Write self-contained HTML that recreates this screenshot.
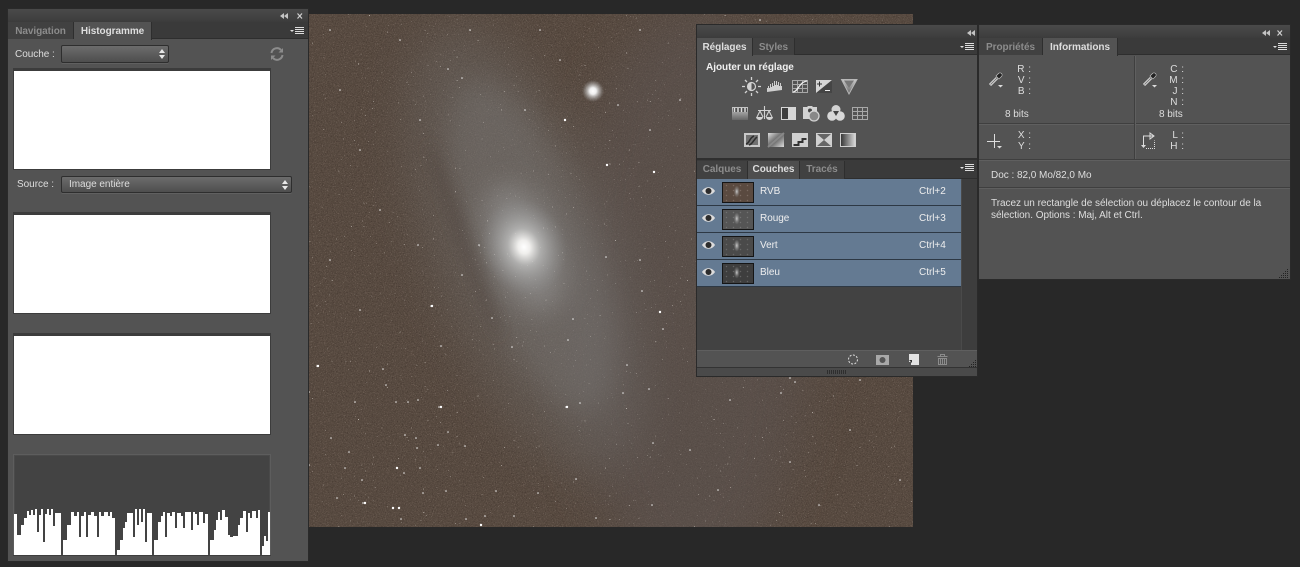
<!DOCTYPE html>
<html lang="fr"><head><meta charset="utf-8"><title>Photoshop</title>
<style>
html,body{margin:0;padding:0;background:#282828;width:1300px;height:567px;overflow:hidden}
body{position:relative;font-family:"Liberation Sans",sans-serif;font-size:10px;color:#dedede}
.a,.t{position:absolute}
.t{white-space:nowrap;line-height:12px;letter-spacing:-.03px}
.p{position:absolute;background:#535353;box-shadow:0 0 0 1px #2a2a2a}
.hd{position:absolute;background:linear-gradient(#4a4a4a,#3c3c3c);height:13px}
.tb{position:absolute;background:#3a3a3a;height:17px;border-bottom:1px solid #2e2e2e;box-sizing:border-box}
.tab{position:absolute;height:17px;box-sizing:border-box;background:#414141;border-right:1px solid #2e2e2e;color:#8c8c8c;font-weight:bold;text-align:center;line-height:19px;font-size:10px;letter-spacing:-.05px}
.tab.on{background:#535353;color:#dedede}
.sel{position:absolute;box-sizing:border-box;border:1px solid #2e2e2e;border-radius:2px;background:linear-gradient(#6c6c6c,#4e4e4e);box-shadow:0 1px 0 #606060}
.box{position:absolute;box-sizing:border-box;left:13px;width:258px;height:102px;border:1px solid #3c3c3c;border-top:3px solid #3c3c3c;background:#fff}
.ln{position:absolute;background:#404040}
.row{position:absolute;left:697px;width:264px;height:27px;box-sizing:border-box;background:#647a92;border-bottom:1px solid #2d3844}
.th{position:absolute;left:722px;width:32px;height:21px;box-sizing:border-box;border:1px solid #151515;background-size:auto,7px 5px,auto}
svg{position:absolute;overflow:visible}
</style></head><body>

<!-- Astro image -->
<svg class="a" style="left:0;top:0" width="1300" height="567" viewBox="0 0 1300 567">
<defs>
<clipPath id="c"><rect x="309" y="14" width="604" height="513"/></clipPath>
<filter id="b6" x="-100%" y="-50%" width="300%" height="200%"><feGaussianBlur stdDeviation="7"/></filter>
<filter id="b14" x="-60%" y="-60%" width="220%" height="220%"><feGaussianBlur stdDeviation="14"/></filter>
<filter id="b24" x="-80%" y="-60%" width="260%" height="220%"><feGaussianBlur stdDeviation="24"/></filter>
<filter id="n" x="0" y="0" width="100%" height="100%" color-interpolation-filters="sRGB"><feTurbulence type="fractalNoise" baseFrequency=".9" numOctaves="2" seed="4"/><feColorMatrix values="0 0 0 0 .62  0 0 0 0 .54  0 0 0 0 .5  2 2 0 0 -2"/></filter>
<filter id="n2" x="0" y="0" width="100%" height="100%" color-interpolation-filters="sRGB"><feTurbulence type="fractalNoise" baseFrequency=".8" numOctaves="1" seed="9"/><feColorMatrix values="0 0 0 0 .22  0 0 0 0 .17  0 0 0 0 .15  0 2 2 0 -2"/></filter>
<filter id="n3" x="0" y="0" width="100%" height="100%" color-interpolation-filters="sRGB"><feTurbulence type="fractalNoise" baseFrequency=".72" numOctaves="1" seed="21"/><feColorMatrix values="0 0 0 0 .95  0 0 0 0 .93  0 0 0 0 .9  9 9 0 0 -12.400"/></filter>
<radialGradient id="core"><stop offset="0" stop-color="#fff"/><stop offset=".14" stop-color="#efeeec"/><stop offset=".38" stop-color="#b6b6b5" stop-opacity=".85"/><stop offset="1" stop-color="#8c8c8c" stop-opacity="0"/></radialGradient>
<radialGradient id="st"><stop offset="0" stop-color="#fff"/><stop offset=".3" stop-color="#eee"/><stop offset="1" stop-color="#aaa" stop-opacity="0"/></radialGradient>
</defs>
<g clip-path="url(#c)">
<rect x="309" y="14" width="604" height="513" fill="#56493f"/>
<rect x="309" y="14" width="604" height="513" filter="url(#n2)" opacity=".55"/>
<rect x="309" y="14" width="604" height="513" filter="url(#n)" opacity=".4"/>
<ellipse cx="690" cy="300" rx="120" ry="290" fill="#5d5552" opacity=".5" filter="url(#b24)"/>
<g transform="rotate(-20 524 247)">
<ellipse cx="524" cy="250" rx="92" ry="235" fill="#757372" opacity=".35" filter="url(#b24)"/>
<ellipse cx="532" cy="250" rx="60" ry="175" fill="#7e7d7c" opacity=".35" filter="url(#b14)"/>
<ellipse cx="470" cy="220" rx="6" ry="105" fill="#453831" opacity=".4" filter="url(#b6)"/>
<ellipse cx="524" cy="248" rx="34" ry="66" fill="#9c9c9c" opacity=".55" filter="url(#b14)"/>
</g>
<ellipse cx="524" cy="247" rx="42" ry="50" fill="url(#core)" transform="rotate(-20 524 247)"/>
<circle cx="593" cy="91" r="11" fill="url(#st)"/>
<rect x="309" y="14" width="604" height="513" filter="url(#n3)" opacity=".7"/>
<path stroke="#f4f4f4" stroke-width="1.500" stroke-linecap="round" fill="none" d="M565 120h0M607 165h0M654 172h0M618 105h0M462 78h0M448 69h0M479 245h0M462 275h0M418 245h0M492 318h0M431 306h0M573 319h0M606 257h0M642 291h0M663 329h0M580 403h0M512 347h0M448 432h0M439 407h0M566 407h0M568 340h0M623 393h0M649 389h0M627 365h0M317 366h0M418 400h0M441 346h0M383 369h0M386 385h0M331 438h0M309 392h0M408 402h0M355 402h0M396 402h0M397 468h0M420 468h0M363 503h0M401 519h0M466 519h0M485 516h0M514 516h0M596 518h0M652 505h0M718 490h0M781 393h0M790 462h0M819 505h0M653 443h0M576 479h0M538 493h0M496 491h0M438 445h0M465 446h0M446 491h0M423 493h0M337 498h0M345 468h0M362 480h0M404 473h0M405 435h0M416 438h0M417 448h0M349 452h0M309 465h0M745 348h0M737 350h0M790 378h0M795 382h0M660 312h0M640 260h0M720 250h0M770 290h0M812 220h0M860 240h0M900 170h0M880 100h0M700 70h0M760 20h0M830 60h0M360 150h0M340 90h0M420 120h0M380 210h0M330 260h0M360 310h0M880 300h0M850 430h0M900 480h0M690 450h0M730 400h0M835 360h0M860 380h0M740 250h0M640 30h0M540 30h0M400 40h0M330 30h0M470 30h0M525 110h0M560 60h0M650 130h0M680 100h0"/>
<path stroke="#fff" stroke-width="2.400" stroke-linecap="round" fill="none" d="M441 407h0M567 407h0M393 508h0M399 508h0M318 366h0M432 306h0M654 172h0M607 165h0M565 120h0M660 312h0M365 503h0M397 468h0M481 525h0"/>
</g>
</svg>

<!-- LEFT PANEL -->
<div class="p" style="left:8px;top:9px;width:300px;height:552px">
<div class="hd" style="left:0;top:0;width:300px"></div>
<div class="tb" style="left:0;top:13px;width:300px"></div>
<div class="tab" style="left:0;top:13px;width:66px">Navigation</div>
<div class="tab on" style="left:66px;top:13px;width:78px;height:18px">Histogramme</div>
</div>
<svg style="left:280px;top:13px" width="24" height="8"><path d="M4 0v6L0 3zM8 0v6L4 3z" fill="#c4c4c4"/><path d="M17.500 .5l4.500 5M22 .5l-4.500 5" stroke="#d0d0d0" stroke-width="1.200"/></svg>
<svg style="left:290px;top:27px" width="15" height="9"><path d="M0 3h4L2 5z" fill="#ddd"/><path d="M5 .5h9M5 2.500h9M5 4.500h9M5 6.500h9" stroke="#ddd"/></svg>
<div class="t" style="left:15px;top:49px;font-size:10px">Couche :</div>
<div class="sel" style="left:61px;top:45px;width:108px;height:18px"></div>
<svg style="left:159px;top:49px" width="6" height="10"><path d="M3 0L6 4H0zM3 10L0 6h6z" fill="#e8e8e8"/></svg>
<svg style="left:270px;top:47px" width="14" height="14" viewBox="0 0 14 14"><path d="M1.500 6A5.500 5.500 0 0 1 11 3M12.500 8A5.500 5.500 0 0 1 3 11" fill="none" stroke="#8c8c8c" stroke-width="2"/><path d="M13 1v4.500H8.500zM1 13V8.500h4.500z" fill="#8c8c8c"/></svg>
<div class="box" style="top:68px"></div>
<div class="t" style="left:17px;top:179px;font-size:10px">Source :</div>
<div class="sel" style="left:61px;top:176px;width:231px;height:17px"></div>
<div class="t" style="left:69px;top:179px;font-size:10px">Image entière</div>
<svg style="left:282px;top:180px" width="6" height="10"><path d="M3 0L6 4H0zM3 10L0 6h6z" fill="#e8e8e8"/></svg>
<div class="box" style="top:212px"></div>
<div class="box" style="top:333px"></div>
<div class="a" style="left:13px;top:454px;width:258px;height:102px;box-sizing:border-box;border:1px solid #5d5d5d;background:#434343;box-shadow:inset 0 0 0 1px #4a4a4a"></div>
<svg style="left:0;top:0" width="1300" height="567"><path fill="#fff" d="M14 555V514H17V535H21V525H24V518H27V511H29V515H31V510H33V515H35V509H37V532H39V515H41V509H43V542H45V514H47V509H49V515H51V509H53V526H55V513H57V513H61V555ZM63 555V540H67V525H71V512H74V516H77V512H79V537H81V516H84V512H86V537H88V515H91V512H94V516H97V537H99V512H101V516H104V512H108V516H110V512H112V518H115V555ZM117 555V550H120V540H123V528H125V522H127V513H133V537H135V509H137V525H139V509H141V522H143V509H145V542H147V513H152V555ZM154 555V540H158V522H161V516H163V512H165V537H167V513H170V516H172V512H175V528H177V513H181V516H183V528H185V512H191V530H193V512H195V514H197V525H199V512H203V523H205V514H208V555ZM210 555V540H214V530H216V520H218V512H220V520H222V510H225V517H228V535H230V537H233V536H235V536H238V525H240V518H243V511H246V532H248V513H250V518H252V511H256V518H258V510H260V555ZM262 555V546H264V536H266V541H268V512H270V555Z"/></svg>
<div class="a" style="left:13px;top:555px;width:258px;height:1px;background:#3e3e3e"></div>

<!-- MIDDLE PANEL -->
<div class="p" style="left:697px;top:25px;width:280px;height:351px">
<div class="hd" style="left:0;top:0;width:280px"></div>
<div class="tb" style="left:0;top:13px;width:280px"></div>
<div class="tab on" style="left:0;top:13px;width:56px;height:18px">Réglages</div>
<div class="tab" style="left:56px;top:13px;width:42px">Styles</div>
<div class="tb" style="left:0;top:133px;width:280px;height:21px;border-top:2px solid #2f2f2f"></div>
<div class="tab" style="left:0;top:136px;width:51px;height:18px;line-height:18px">Calques</div>
<div class="tab on" style="left:51px;top:136px;width:52px;height:18px;line-height:18px;background:#4e4e4e">Couches</div>
<div class="tab" style="left:103px;top:136px;width:45px;height:18px;line-height:18px">Tracés</div>
<div class="a" style="left:0;top:154px;width:280px;height:171px;background:#424242"></div>
<div class="a" style="left:264px;top:154px;width:16px;height:171px;background:#3d3d3d;border-left:1px solid #4a4a4a;box-sizing:border-box"></div>
<div class="a" style="left:0;top:325px;width:280px;height:1px;background:#5f5f5f"></div>
<div class="a" style="left:0;top:342px;width:280px;height:9px;background:#4a4a4a;border-top:1px solid #333;box-sizing:border-box"></div>
</div>
<svg style="left:967px;top:30px" width="8" height="7"><path d="M4 0v6L0 3zM8 0v6L4 3z" fill="#c4c4c4"/></svg>
<svg style="left:960px;top:43px" width="15" height="9"><path d="M0 3h4L2 5z" fill="#ddd"/><path d="M5 .5h9M5 2.500h9M5 4.500h9M5 6.500h9" stroke="#ddd"/></svg>
<svg style="left:960px;top:164px" width="15" height="9"><path d="M0 3h4L2 5z" fill="#ddd"/><path d="M5 .5h9M5 2.500h9M5 4.500h9M5 6.500h9" stroke="#ddd"/></svg>
<div class="t" style="left:706px;top:62px;font-weight:bold;font-size:10px;color:#f0f0f0">Ajouter un réglage</div>

<svg style="left:0;top:0" width="1300" height="567">
<defs><linearGradient id="g1" x1="0" y1="0" x2="0" y2="1"><stop offset="0" stop-color="#c8c8c8"/><stop offset="1" stop-color="#666"/></linearGradient>
<linearGradient id="g2" x1="0" y1="0" x2="1" y2="0"><stop offset="0" stop-color="#333"/><stop offset="1" stop-color="#ddd"/></linearGradient>
<linearGradient id="g3" x1="0" y1="0" x2="1" y2="1"><stop offset="0" stop-color="#ddd"/><stop offset=".5" stop-color="#666"/><stop offset="1" stop-color="#ddd"/></linearGradient></defs>
<!-- row 1 -->
<g fill="none" stroke="#d2d2d2">
<circle cx="751.500" cy="86.500" r="4" stroke-width="1.200"/><path d="M751.500 77v3M751.500 93v3M742 86.500h3M758 86.500h3M745 80l2 2M756 91l2 2M758 80l-2 2M747 91l-2 2" stroke-width="1.300"/>
<path d="M751.500 82.500a4 4 0 0 0 0 8z" fill="#d2d2d2" stroke="none"/>
</g>
<path d="M767 92V88h1v-2h1v2h1v-4h1v3h1v-4h1v3h1v-5h1v4h1v-4h1v4h1v-3h1v4h1v-3h1v3h1v4z" fill="#cfcfcf"/>
<g fill="none" stroke="#a8a8a8"><rect x="792.500" y="80.500" width="15" height="12"/><path d="M797.500 81v12M802.500 81v12M792 84.500h16M792 88.500h16"/><path d="M793 92c5 0 6-10 14-11" stroke="#eee" stroke-width="1.300"/></g>
<rect x="816" y="80" width="16" height="13" fill="#d6d6d6"/><path d="M816 93L832 80V93z" fill="#454545"/><path d="M817 84h5M819.500 81.500v5" stroke="#333"/><path d="M825 90.500h5" stroke="#eee"/>
<path d="M841.500 79.500H857L849 94z" fill="url(#g1)" stroke="#b8b8b8"/>
<path d="M844 80.500H854L849 88z" fill="#777"/>
<!-- row 2 -->
<rect x="732" y="107" width="16" height="13" fill="url(#g1)"/><path d="M733 108h14v4h-14z" fill="#4d4d4d"/><path d="M734.500 108v4M738 108v4M741.500 108v4M745 108v4" stroke="#ddd" stroke-width="1.500"/>
<g fill="none" stroke="#d2d2d2"><path d="M764.500 106v13M758 110.500h13M760 111l-3 6M760 111l3 6M769 111l-3 6M769 111l3 6" stroke-width="1.100"/><path d="M756 117h7a3.500 3 0 0 1-7 0zM766 117h7a3.500 3 0 0 1-7 0z" fill="#d2d2d2" stroke="none"/></g>
<rect x="781" y="107" width="15" height="13" fill="#d6d6d6"/><rect x="782" y="108" width="6" height="11" fill="#3e3e3e"/>
<path d="M803 107h4l1-1h4l1 1h4v6a5 5 0 0 0-6 6h-8z" fill="#d2d2d2"/><circle cx="810" cy="110.500" r="2" fill="#444"/>
<circle cx="814" cy="116" r="5" fill="#888" stroke="#d2d2d2" stroke-width="1.300"/>
<circle cx="836" cy="109.500" r="4.500" fill="#d2d2d2"/><circle cx="832" cy="116" r="4.800" fill="#d8d8d8"/><circle cx="840" cy="116" r="4.800" fill="#d8d8d8"/><path d="M833 111h6l-3 5z" fill="#444"/>
<g fill="none" stroke="#a8a8a8"><rect x="852.500" y="107.500" width="15" height="12"/><path d="M857.500 107v13M862.500 107v13M852 111.500h16M852 115.500h16"/></g>
<!-- row 3 -->
<rect x="744" y="133" width="16" height="14" fill="#c8c8c8"/><rect x="746" y="135" width="12" height="10" fill="#707070"/><path d="M746 144c4-1 3-6 8-8M749 145c4-1 4-5 8-8" stroke="#2d2d2d" stroke-width="1.500" fill="none"/>
<rect x="768" y="133" width="16" height="14" fill="url(#g3)"/><path d="M768 147l16-14" stroke="#888" stroke-width="2"/>
<rect x="792" y="133" width="16" height="14" fill="#d0d0d0"/><path d="M793.500 146v-2h4v-3h4v-3h5v2h-3v3h-4v3z" fill="#333"/>
<rect x="816" y="133" width="16" height="14" fill="#d0d0d0"/><path d="M817 134h14l-7 6zM817 146h14l-7-6z" fill="#666"/>
<rect x="840.500" y="133.500" width="15" height="13" fill="url(#g2)" stroke="#d0d0d0"/>
</svg>

<!-- channel rows -->
<div class="row" style="top:179px"></div><div class="row" style="top:206px"></div><div class="row" style="top:233px"></div><div class="row" style="top:260px"></div>
<div class="th" style="top:182px;background-image:radial-gradient(ellipse 3px 6px at 46% 45%,#c8c8c8 0,#7d7570 50%,transparent 100%),radial-gradient(circle,#8a7a70 0,transparent 1px);background-color:#5a4a40"></div>
<div class="th" style="top:209px;background-image:radial-gradient(ellipse 3px 6px at 46% 45%,#c8c8c8 0,#7d7d7d 50%,transparent 100%),radial-gradient(circle,#808080 0,transparent 1px);background-color:#555"></div>
<div class="th" style="top:236px;background-image:radial-gradient(ellipse 3px 6px at 46% 45%,#c8c8c8 0,#7d7d7d 50%,transparent 100%),radial-gradient(circle,#777 0,transparent 1px);background-color:#4a4a4a"></div>
<div class="th" style="top:263px;background-image:radial-gradient(ellipse 3px 6px at 46% 45%,#c8c8c8 0,#6d6d6d 50%,transparent 100%),radial-gradient(circle,#777 0,transparent 1px);background-color:#3e3e3e"></div>
<svg style="left:0;top:0" width="1300" height="567">
<path d="M702 191c3-5 10-5 13 0c-3 5-10 5-13 0z" fill="#dcdcdc"/><circle cx="708.500" cy="191" r="3" fill="#2c2c2c"/>
<g transform="translate(0 27)"><path d="M702 191c3-5 10-5 13 0c-3 5-10 5-13 0z" fill="#dcdcdc"/><circle cx="708.500" cy="191" r="3" fill="#2c2c2c"/></g>
<g transform="translate(0 54)"><path d="M702 191c3-5 10-5 13 0c-3 5-10 5-13 0z" fill="#dcdcdc"/><circle cx="708.500" cy="191" r="3" fill="#2c2c2c"/></g>
<g transform="translate(0 81)"><path d="M702 191c3-5 10-5 13 0c-3 5-10 5-13 0z" fill="#dcdcdc"/><circle cx="708.500" cy="191" r="3" fill="#2c2c2c"/></g>
<!-- footer icons -->
<circle cx="853" cy="359.500" r="4.500" fill="none" stroke="#ddd" stroke-dasharray="2 1.500"/>
<rect x="876" y="355" width="13" height="10" fill="#a8a8a8"/><circle cx="882.500" cy="360" r="3" fill="#555"/>
<path d="M909 354h10v11h-8v-3h-2z" fill="#e2e2e2"/><path d="M909 360l3 3v-3z" fill="#333"/>
<path d="M937.500 356.500h10M940.500 356v-1.500h4v1.500M938.500 358.500h8v6h-8z" fill="none" stroke="#8c8c8c"/><path d="M940.500 359v5M942.500 359v5M944.500 359v5" stroke="#8c8c8c"/>
<path d="M827.500 370v4M829.500 370v4M831.500 370v4M833.500 370v4M835.500 370v4M837.500 370v4M839.500 370v4M841.500 370v4M843.500 370v4M845.500 370v4" stroke="#2e2e2e"/>
<path d="M975 360h1v1h-1zM973 362h1v1h-1zM975 362h1v1h-1zM971 364h1v1h-1zM973 364h1v1h-1zM975 364h1v1h-1zM969 366h1v1h-1zM971 366h1v1h-1zM973 366h1v1h-1zM975 366h1v1h-1z" fill="#222"/>
</svg>
<div class="t" style="left:760px;top:186px;color:#eee">RVB</div><div class="t" style="left:919px;top:186px;color:#eee">Ctrl+2</div>
<div class="t" style="left:760px;top:213px;color:#eee">Rouge</div><div class="t" style="left:919px;top:213px;color:#eee">Ctrl+3</div>
<div class="t" style="left:760px;top:240px;color:#eee">Vert</div><div class="t" style="left:919px;top:240px;color:#eee">Ctrl+4</div>
<div class="t" style="left:760px;top:267px;color:#eee">Bleu</div><div class="t" style="left:919px;top:267px;color:#eee">Ctrl+5</div>

<!-- RIGHT PANEL -->
<div class="p" style="left:979px;top:25px;width:311px;height:254px">
<div class="hd" style="left:0;top:0;width:311px"></div>
<div class="tb" style="left:0;top:13px;width:311px"></div>
<div class="tab" style="left:0;top:13px;width:64px">Propriétés</div>
<div class="tab on" style="left:64px;top:13px;width:75px;height:18px">Informations</div>
<div class="ln" style="left:0;top:98px;width:311px;height:1px;background:#3f3f3f;box-shadow:0 1px 0 #5f5f5f"></div>
<div class="ln" style="left:0;top:134px;width:311px;height:1px;background:#3f3f3f;box-shadow:0 1px 0 #5f5f5f"></div>
<div class="ln" style="left:0;top:162px;width:311px;height:1px;background:#3f3f3f;box-shadow:0 1px 0 #5f5f5f"></div>
<div class="ln" style="left:155px;top:31px;width:1px;height:103px;background:#3f3f3f;box-shadow:1px 0 0 #5f5f5f"></div>
</div>
<svg style="left:1262px;top:30px" width="24" height="7"><path d="M4 0v6L0 3zM8 0v6L4 3z" fill="#c4c4c4"/><path d="M15.500 .5l4.500 5M20 .5l-4.500 5" stroke="#d0d0d0" stroke-width="1.200"/></svg>
<svg style="left:1273px;top:43px" width="15" height="9"><path d="M0 3h4L2 5z" fill="#ddd"/><path d="M5 .5h9M5 2.500h9M5 4.500h9M5 6.500h9" stroke="#ddd"/></svg>
<div class="t" style="left:1015px;top:64px;width:16px;text-align:right;word-spacing:1px">R :</div>
<div class="t" style="left:1015px;top:75px;width:16px;text-align:right;word-spacing:1px">V :</div>
<div class="t" style="left:1015px;top:86px;width:16px;text-align:right;word-spacing:1px">B :</div>
<div class="t" style="left:1005px;top:109px">8 bits</div>
<div class="t" style="left:1168px;top:64px;width:16px;text-align:right;word-spacing:1px">C :</div>
<div class="t" style="left:1168px;top:75px;width:16px;text-align:right;word-spacing:1px">M :</div>
<div class="t" style="left:1168px;top:86px;width:16px;text-align:right;word-spacing:1px">J :</div>
<div class="t" style="left:1168px;top:97px;width:16px;text-align:right;word-spacing:1px">N :</div>
<div class="t" style="left:1159px;top:109px">8 bits</div>
<div class="t" style="left:1015px;top:130px;width:16px;text-align:right;word-spacing:1px">X :</div>
<div class="t" style="left:1015px;top:141px;width:16px;text-align:right;word-spacing:1px">Y :</div>
<div class="t" style="left:1168px;top:130px;width:16px;text-align:right;word-spacing:1px">L :</div>
<div class="t" style="left:1168px;top:141px;width:16px;text-align:right;word-spacing:1px">H :</div>
<svg style="left:0;top:0" width="1300" height="567">
<g>
<path d="M990 85l7-7" stroke="#ddd" stroke-width="3"/><path d="M990.500 84.500l6.500-6.500" stroke="#777" stroke-width="1"/><path d="M996 76l2.500-2.500a1.500 1.500 0 0 1 3 3L999 79z" fill="#222" stroke="#ccc" stroke-width=".6"/><path d="M998 85h5l-2.500 2.500z" fill="#ddd"/>
</g>
<g transform="translate(154 0)">
<path d="M990 85l7-7" stroke="#ddd" stroke-width="3"/><path d="M990.500 84.500l6.500-6.500" stroke="#777" stroke-width="1"/><path d="M996 76l2.500-2.500a1.500 1.500 0 0 1 3 3L999 79z" fill="#222" stroke="#ccc" stroke-width=".6"/><path d="M998 85h5l-2.500 2.500z" fill="#ddd"/>
</g>
<path d="M987 141.500h13M994.500 134v14" stroke="#ddd"/><path d="M997 146h5l-2.500 2.500z" fill="#ddd"/>
<path d="M1143.500 147v-11h10M1150 133l4 3-4 3z" fill="none" stroke="#ddd"/><path d="M1141 145h5l-2.500 3z" fill="#ddd"/><path d="M1146 148.500h8.500v-8" fill="none" stroke="#ddd" stroke-dasharray="1 1"/>
<path d="M1287 269h1v1h-1zM1285 271h1v1h-1zM1287 271h1v1h-1zM1283 273h1v1h-1zM1285 273h1v1h-1zM1287 273h1v1h-1zM1281 275h1v1h-1zM1283 275h1v1h-1zM1285 275h1v1h-1zM1287 275h1v1h-1zM1279 277h1v1h-1zM1281 277h1v1h-1zM1283 277h1v1h-1zM1285 277h1v1h-1zM1287 277h1v1h-1z" fill="#222"/>
</svg>
<div class="t" style="left:991px;top:170px">Doc : 82,0 Mo/82,0 Mo</div>
<div class="t" style="left:991px;top:198px">Tracez un rectangle de sélection ou déplacez le contour de la</div>
<div class="t" style="left:991px;top:210px">sélection. Options : Maj, Alt et Ctrl.</div>
</body></html>
